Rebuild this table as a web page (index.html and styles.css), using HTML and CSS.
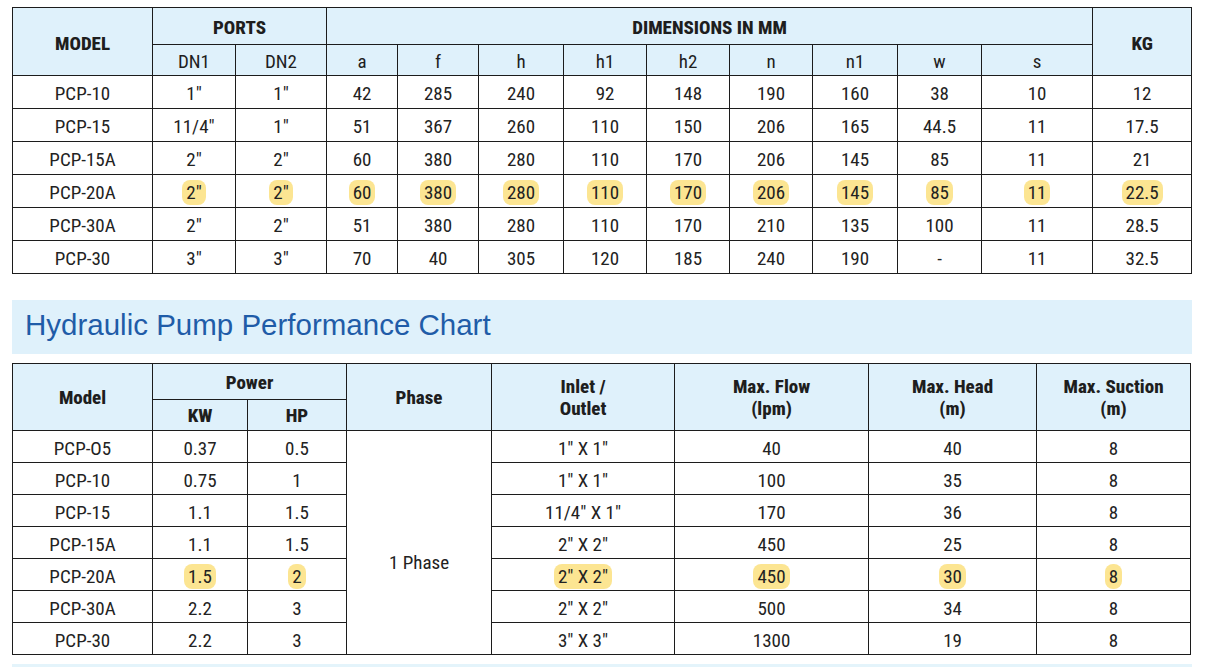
FILE: index.html
```html
<!DOCTYPE html>
<html>
<head>
<meta charset="utf-8">
<link rel="stylesheet" href="styles.css">
</head>
<body>
<div class="page">
  <table class="grid dims">
    <colgroup>
      <col class="w140"><col class="w83"><col class="w91"><col class="w71"><col class="w81"><col class="w85"><col class="w83"><col class="w83"><col class="w83"><col class="w85"><col class="w84"><col class="w111"><col class="w99">
    </colgroup>
    <tr class="hrow1">
      <th rowspan="2">MODEL</th><th colspan="2">PORTS</th><th colspan="9">DIMENSIONS IN MM</th><th rowspan="2">KG</th>
    </tr>
    <tr class="hrow2 light">
      <th>DN1</th><th>DN2</th><th>a</th><th>f</th><th>h</th><th>h1</th><th>h2</th><th>n</th><th>n1</th><th>w</th><th>s</th>
    </tr>
    <tr><td>PCP-10</td><td>1"</td><td>1"</td><td>42</td><td>285</td><td>240</td><td>92</td><td>148</td><td>190</td><td>160</td><td>38</td><td>10</td><td>12</td></tr>
    <tr><td>PCP-15</td><td>11/4"</td><td>1"</td><td>51</td><td>367</td><td>260</td><td>110</td><td>150</td><td>206</td><td>165</td><td>44.5</td><td>11</td><td>17.5</td></tr>
    <tr><td>PCP-15A</td><td>2"</td><td>2"</td><td>60</td><td>380</td><td>280</td><td>110</td><td>170</td><td>206</td><td>145</td><td>85</td><td>11</td><td>21</td></tr>
    <tr><td>PCP-20A</td><td><span class="hl">2"</span></td><td><span class="hl">2"</span></td><td><span class="hl">60</span></td><td><span class="hl">380</span></td><td><span class="hl">280</span></td><td><span class="hl">110</span></td><td><span class="hl">170</span></td><td><span class="hl">206</span></td><td><span class="hl">145</span></td><td><span class="hl">85</span></td><td><span class="hl">11</span></td><td><span class="hl">22.5</span></td></tr>
    <tr><td>PCP-30A</td><td>2"</td><td>2"</td><td>51</td><td>380</td><td>280</td><td>110</td><td>170</td><td>210</td><td>135</td><td>100</td><td>11</td><td>28.5</td></tr>
    <tr><td>PCP-30</td><td>3"</td><td>3"</td><td>70</td><td>40</td><td>305</td><td>120</td><td>185</td><td>240</td><td>190</td><td>-</td><td>11</td><td>32.5</td></tr>
  </table>

  <div class="band title-band"><h2 class="title">Hydraulic Pump Performance Chart</h2></div>

  <table class="grid perf">
    <colgroup>
      <col class="w140"><col class="w95"><col class="w99"><col class="w145"><col class="w183"><col class="w194"><col class="w168"><col class="w154">
    </colgroup>
    <tr class="prow1">
      <th rowspan="2">Model</th><th colspan="2">Power</th><th rowspan="2">Phase</th><th rowspan="2">Inlet /<br>Outlet</th><th rowspan="2">Max. Flow<br>(lpm)</th><th rowspan="2">Max. Head<br>(m)</th><th rowspan="2">Max. Suction<br>(m)</th>
    </tr>
    <tr class="prow2">
      <th>KW</th><th>HP</th>
    </tr>
    <tr><td>PCP-O5</td><td>0.37</td><td>0.5</td><td rowspan="7" class="phase">1 Phase</td><td>1" X 1"</td><td>40</td><td>40</td><td>8</td></tr>
    <tr><td>PCP-10</td><td>0.75</td><td>1</td><td>1" X 1"</td><td>100</td><td>35</td><td>8</td></tr>
    <tr><td>PCP-15</td><td>1.1</td><td>1.5</td><td>11/4" X 1"</td><td>170</td><td>36</td><td>8</td></tr>
    <tr><td>PCP-15A</td><td>1.1</td><td>1.5</td><td>2" X 2"</td><td>450</td><td>25</td><td>8</td></tr>
    <tr><td>PCP-20A</td><td><span class="hl">1.5</span></td><td><span class="hl">2</span></td><td><span class="hl">2" X 2"</span></td><td><span class="hl">450</span></td><td><span class="hl">30</span></td><td><span class="hl">8</span></td></tr>
    <tr><td>PCP-30A</td><td>2.2</td><td>3</td><td>2" X 2"</td><td>500</td><td>34</td><td>8</td></tr>
    <tr><td>PCP-30</td><td>2.2</td><td>3</td><td>3" X 3"</td><td>1300</td><td>19</td><td>8</td></tr>
  </table>

  <div class="band bottom-band"></div>
</div>
</body>
</html>
```

FILE: styles.css
```css
html, body {
  margin: 0;
  padding: 0;
  background: #ffffff;
}

.page {
  padding: 7px 14px 0 12px;
  font-family: "Roboto Condensed", Roboto, sans-serif;
  font-stretch: 75%;
  color: #222222;
}

.grid {
  border-collapse: collapse;
  table-layout: fixed;
  width: 1179px;
}

.grid th,
.grid td {
  border: 1px solid #1c1c1c;
  padding: 0;
  text-align: center;
  vertical-align: middle;
  white-space: nowrap;
}

.grid th {
  background: #dff1fb;
  font-weight: 800;
  font-size: 19px;
  color: #1e1e1e;
}

.grid td {
  font-size: 19px;
  font-weight: normal;
}

.w140 { width: 140px; }
.w83 { width: 83px; }
.w91 { width: 91px; }
.w71 { width: 71px; }
.w81 { width: 81px; }
.w85 { width: 85px; }
.w84 { width: 84px; }
.w111 { width: 111px; }
.w99 { width: 99px; }
.w95 { width: 95px; }
.w145 { width: 145px; }
.w183 { width: 183px; }
.w194 { width: 194px; }
.w168 { width: 168px; }
.w154 { width: 154px; }

.dims .hrow1 { height: 37px; }
.dims .hrow1 th { padding-top: 3px; }
.dims .hrow2 { height: 31px; }
.dims .hrow2 th {
  font-weight: normal;
  font-size: 19px;
  padding-top: 3px;
}
.dims tr { height: 33px; }
.dims td { padding-top: 3px; }

.hl {
  display: inline-block;
  background: #fce592;
  border-radius: 8px;
  padding: 0 4px;
  line-height: 25px;
}

.band {
  background: #dff1fb;
}

.title-band {
  margin-top: 26px;
  height: 54px;
  width: 1180px;
  display: flex;
  align-items: center;
  padding-left: 13px;
  box-sizing: border-box;
}

.title {
  margin: 0 0 5px 0;
  font-family: "Liberation Sans", Arial, sans-serif;
  font-stretch: normal;
  font-weight: normal;
  font-size: 29.5px;
  color: #1f5ca8;
}

.perf {
  margin-top: 9px;
}

.perf .prow1 { height: 36px; }
.perf .prow2 { height: 31px; }
.perf th {
  font-size: 19px;
  line-height: 22px;
  padding-top: 2px;
}
.perf tr { height: 32px; }
.perf td { padding-top: 3px; }

.perf td.phase {
  vertical-align: middle;
  padding-top: 40px;
}

.bottom-band {
  margin-top: 9px;
  height: 10px;
  width: 1180px;
  background: #e4f4fb;
}
```
